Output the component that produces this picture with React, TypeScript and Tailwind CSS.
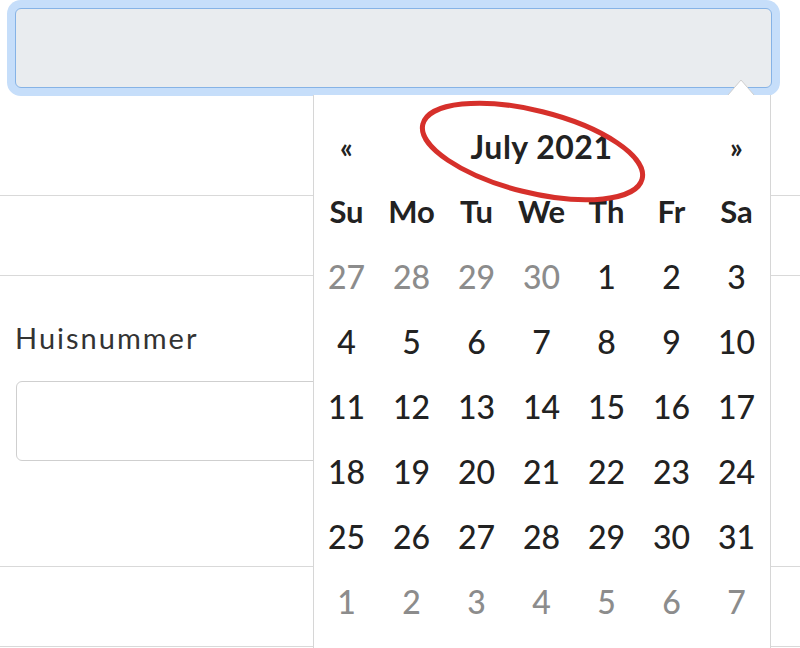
import React from "react";

const dows = ["Su", "Mo", "Tu", "We", "Th", "Fr", "Sa"];

type Day = { n: number; muted: boolean };

function buildDays(): Day[] {
  const days: Day[] = [];
  [27, 28, 29, 30].forEach((n) => days.push({ n, muted: true }));
  for (let i = 1; i <= 31; i++) days.push({ n: i, muted: false });
  for (let i = 1; i <= 7; i++) days.push({ n: i, muted: true });
  return days;
}

export default function App() {
  const days = buildDays();
  return (
    <div
      className="relative w-[800px] h-[648px] overflow-hidden bg-white"
      style={{ fontFamily: "Lato, 'Open Sans', sans-serif" }}
    >
      {/* Focused (readonly) date input */}
      <div className="pt-[8px] pl-[15px]">
        <div className="w-[757px] h-[80px] rounded-[6px] border border-[#86b3e6] bg-[#e9ecef] shadow-[0_0_0_8px_#c6defa]" />
      </div>

      {/* Form rows underneath */}
      <div className="mt-[107px] border-t border-[#d9d9d9] h-[80px]" />
      <div className="border-t border-[#d9d9d9] h-[291px] pl-[15px] pt-[42px]">
        <div className="text-[29px] leading-[40px] text-[#333333] tracking-[2px]">Huisnummer</div>
        <div className="mt-[23px] ml-[1px] w-[500px] h-[80px] rounded-[6px] border border-[#cfcfcf] bg-white" />
      </div>
      <div className="border-t border-[#d9d9d9] h-[80px]" />
      <div className="border-t border-[#d9d9d9]" />

      {/* Datepicker dropdown */}
      <div className="absolute left-[313px] top-[95px] w-[458px] h-[600px] bg-white border-l border-r border-[#d6d6d6] pt-[19px]">
        <svg
          className="absolute left-[413px] top-[-16px]"
          width="28"
          height="17"
          viewBox="0 0 28 17"
        >
          <polygon points="1,16 14,1 27,16" fill="#ffffff" />
          <polyline points="1,16 14,1 27,16" fill="none" stroke="#cfcfcf" strokeWidth="1" />
        </svg>
        <div className="grid grid-cols-[repeat(7,65px)] text-[#222222]">
          <div className="h-[65px] flex items-center justify-center text-[28px] font-bold">«</div>
          <div className="col-span-5 h-[65px] flex items-center justify-center text-[32px] font-bold tracking-[0.5px]">
            July 2021
          </div>
          <div className="h-[65px] flex items-center justify-center text-[28px] font-bold">»</div>
          {dows.map((d) => (
            <div key={d} className="h-[65px] flex items-center justify-center text-[31px] font-bold">
              {d}
            </div>
          ))}
          {days.map((d, i) => (
            <div
              key={i}
              className={
                "h-[65px] flex items-center justify-center text-[32px] font-medium " +
                (d.muted ? "text-[#8c8c8c]" : "text-[#222222]")
              }
            >
              {d.n}
            </div>
          ))}
        </div>
      </div>

      {/* Red annotation ellipse */}
      <svg className="absolute left-0 top-0 pointer-events-none" width="800" height="648">
        <ellipse
          cx="532.5"
          cy="151.5"
          rx="113"
          ry="41"
          transform="rotate(14 532.5 151.5)"
          fill="none"
          stroke="#d6302b"
          strokeWidth="5"
        />
      </svg>
    </div>
  );
}
